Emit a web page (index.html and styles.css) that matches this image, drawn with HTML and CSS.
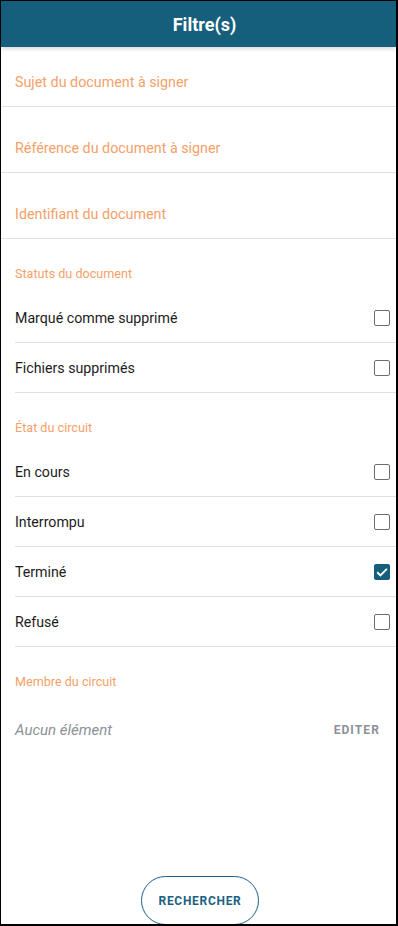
FILE: index.html
```html
<!DOCTYPE html>
<html lang="fr">
<head>
    <meta charset="UTF-8">
    <meta name="viewport" content="width=device-width, initial-scale=1.0">
    <title>Filtre(s)</title>
    <link rel="stylesheet" href="styles.css">
</head>
<body>
    <div class="page">
        <div class="header">
            <h1>Filtre(s)</h1>
        </div>

        <div class="content">
            <div class="field field-first">Sujet du document à signer</div>
            <div class="field">Référence du document à signer</div>
            <div class="field">Identifiant du document</div>

            <div class="section-label">Statuts du document</div>
            <div class="check-row">
                <span>Marqué comme supprimé</span>
                <span class="box"></span>
            </div>
            <div class="check-row">
                <span>Fichiers supprimés</span>
                <span class="box"></span>
            </div>

            <div class="section-label">État du circuit</div>
            <div class="check-row">
                <span>En cours</span>
                <span class="box"></span>
            </div>
            <div class="check-row">
                <span>Interrompu</span>
                <span class="box"></span>
            </div>
            <div class="check-row">
                <span>Terminé</span>
                <span class="box checked">
                    <svg viewBox="0 0 16 16" width="16" height="16">
                        <path d="M3.2 8.3 L6.4 11.4 L12.9 4.9" fill="none" stroke="#fff" stroke-width="2"/>
                    </svg>
                </span>
            </div>
            <div class="check-row">
                <span>Refusé</span>
                <span class="box"></span>
            </div>

            <div class="section-label">Membre du circuit</div>
            <div class="member-row">
                <span class="empty">Aucun élément</span>
                <span class="edit">EDITER</span>
            </div>
        </div>

        <div class="footer">
            <button type="button" class="search-btn">RECHERCHER</button>
        </div>
    </div>
</body>
</html>
```

FILE: styles.css
```css
html, body {
    margin: 0;
    height: 100%;
}
body {
    font-family: Roboto, "Liberation Sans", sans-serif;
    background: #fff;
}
.page {
    height: 100%;
    box-sizing: border-box;
    border-style: solid;
    border-color: #000;
    border-width: 1px 2px 2px 1px;
    display: flex;
    flex-direction: column;
    overflow: hidden;
}
.header {
    height: 46px;
    padding-left: 12px;
    background-color: #155e7c;
    display: flex;
    align-items: center;
    justify-content: center;
    box-shadow: 0 2px 4px rgba(0, 0, 0, 0.15);
    position: relative;
    z-index: 1;
}
.header h1 {
    margin: 0;
    font-size: 18px;
    font-weight: 700;
    color: #fff;
}
.content {
    flex: 1;
}
.field {
    padding: 32px 14px 15px;
    line-height: 18px;
    font-size: 14.3px;
    color: #f5a16a;
    border-bottom: 1px solid #e0e0e0;
}
.field-first {
    padding-top: 26px;
}
.section-label {
    padding: 26px 14px 10px;
    line-height: 18px;
    font-size: 12.6px;
    color: #f5a16a;
}
.check-row {
    margin-left: 14px;
    padding-right: 6px;
    height: 49px;
    border-bottom: 1px solid #e0e0e0;
    display: flex;
    align-items: center;
    justify-content: space-between;
    font-size: 14.2px;
    color: #1c1c1c;
}
.box {
    width: 16px;
    height: 16px;
    box-sizing: border-box;
    border: 1.5px solid #6e6e6e;
    border-radius: 2px;
    display: flex;
}
.box.checked {
    border: none;
    background-color: #155e7c;
}
.member-row {
    padding: 20px 16px 0 14px;
    display: flex;
    align-items: center;
    justify-content: space-between;
}
.empty {
    font-size: 15px;
    font-style: italic;
    color: #8d9198;
}
.edit {
    font-size: 12px;
    font-weight: 700;
    letter-spacing: 1.1px;
    color: #8d9198;
}
.footer {
    display: flex;
    justify-content: center;
    padding-left: 3px;
}
.search-btn {
    width: 118px;
    height: 49px;
    margin-bottom: -1px;
    border: 1px solid #1b6282;
    border-radius: 25px;
    background: #fff;
    font-family: Roboto, "Liberation Sans", sans-serif;
    font-size: 12px;
    font-weight: 700;
    letter-spacing: 0.7px;
    color: #1b6282;
}
```
